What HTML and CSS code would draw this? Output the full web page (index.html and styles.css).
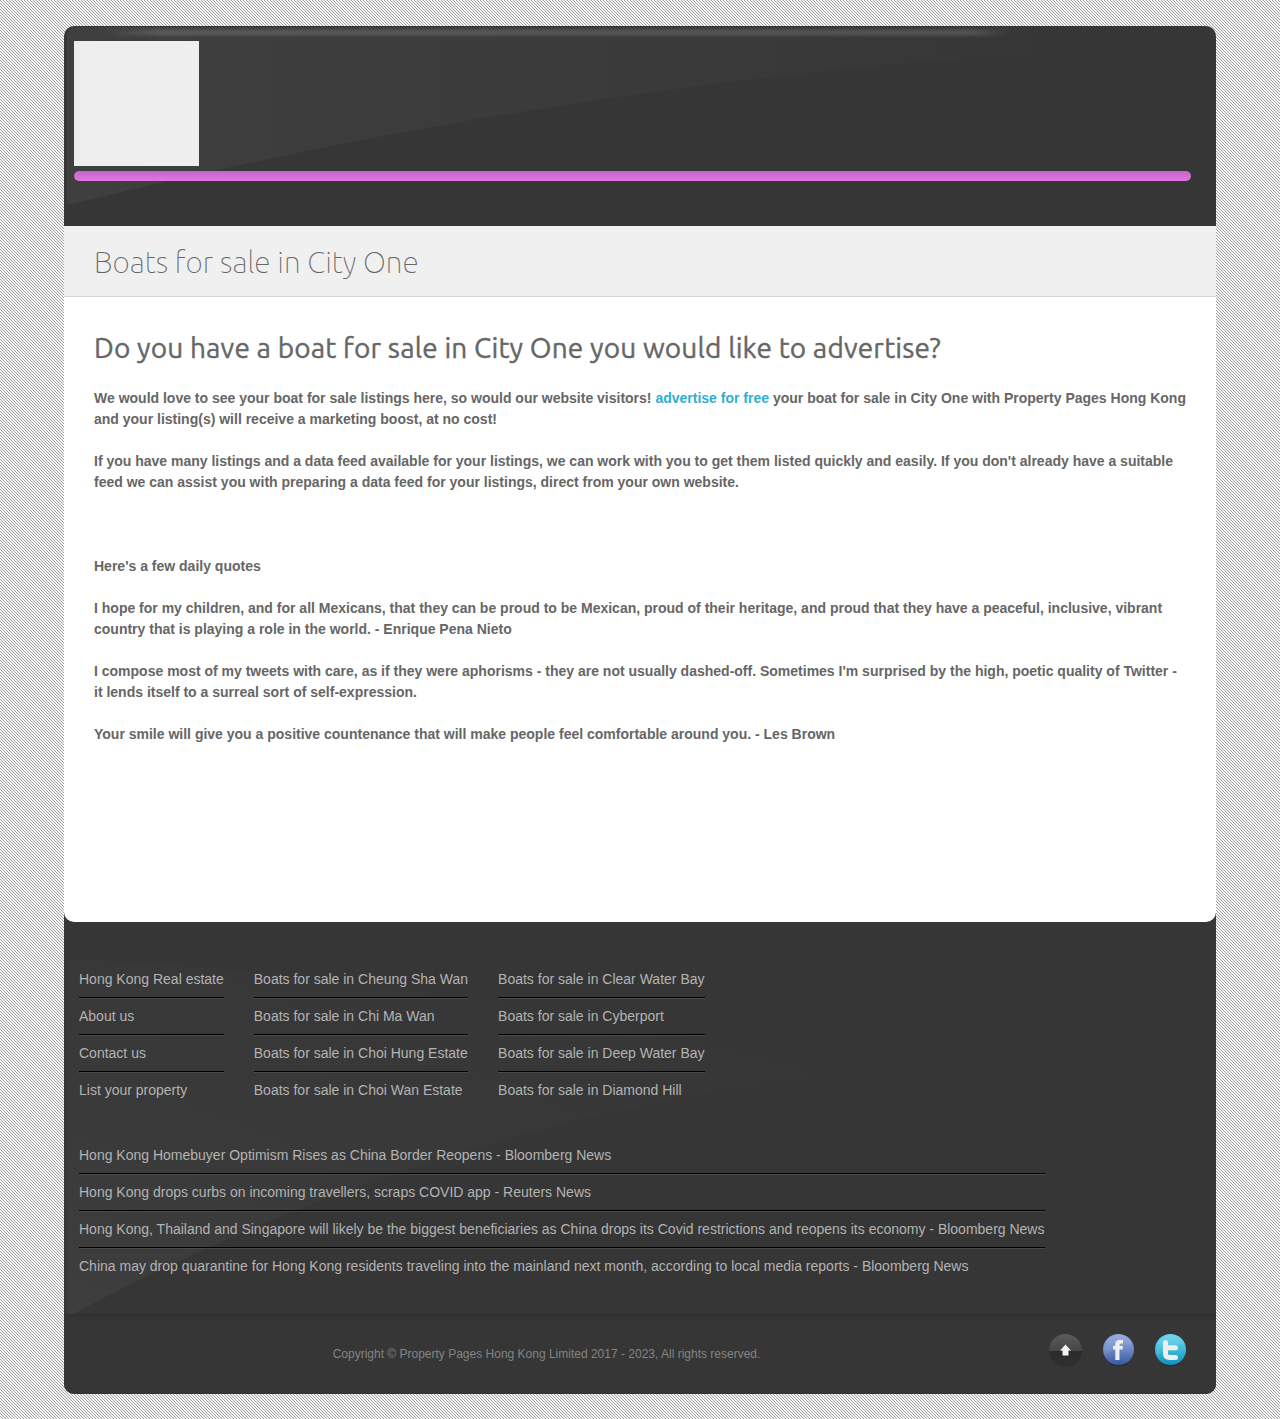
FILE: index.html
```html
<!DOCTYPE html>
<html lang="en">
<head>
<meta charset="utf-8">
<title>Boats for sale in City One</title>
<link rel="stylesheet" href="styles.css">
</head>
<body>
<div class="page">
  <header class="header">
    <svg class="header-shine" width="966" height="180" viewBox="0 0 966 180" aria-hidden="true">
      <defs>
        <linearGradient id="sweep" x1="0" x2="1"><stop offset="0" stop-color="#3f3f3f"/><stop offset=".5" stop-color="#3b3b3b"/><stop offset="1" stop-color="#373737"/></linearGradient>
        <linearGradient id="glow" x1="0" x2="1"><stop offset="0" stop-color="#595959" stop-opacity="0"/><stop offset=".06" stop-color="#595959"/><stop offset=".96" stop-color="#525252"/><stop offset="1" stop-color="#505050" stop-opacity="0"/></linearGradient>
        <filter id="soft" x="-5%" y="-200%" width="110%" height="500%"><feGaussianBlur stdDeviation="3 1.8"/></filter>
      </defs>
      <path d="M0 12Q0 1 10 1H962V27Q480 60 0 179Z" fill="url(#sweep)"/>
      <rect x="36" y="3.5" width="906" height="6" fill="url(#glow)" filter="url(#soft)"/>
    </svg>
    <div class="logo"></div>
    <div class="menu-bar"></div>
  </header>
  <div class="title-bar"><h1>Boats for sale in City One</h1></div>
  <main class="content">
    <h2>Do you have a boat for sale in City One you would like to advertise?</h2>
    <p>We would love to see your boat for sale listings here, so would our website visitors! <a href="#">advertise for free</a> your boat for sale in City One with Property Pages Hong Kong and your listing(s) will receive a marketing boost, at no cost!</p>
    <p class="feed">If you have many listings and a data feed available for your listings, we can work with you to get them listed quickly and easily. If you don't already have a suitable feed we can assist you with preparing a data feed for your listings, direct from your own website.</p>
    <p>Here's a few daily quotes</p>
    <p>I hope for my children, and for all Mexicans, that they can be proud to be Mexican, proud of their heritage, and proud that they have a peaceful, inclusive, vibrant country that is playing a role in the world. - Enrique Pena Nieto</p>
    <p>I compose most of my tweets with care, as if they were aphorisms - they are not usually dashed-off. Sometimes I'm surprised by the high, poetic quality of Twitter - it lends itself to a surreal sort of self-expression.</p>
    <p>Your smile will give you a positive countenance that will make people feel comfortable around you. - Les Brown</p>
  </main>
  <footer class="footer">
    <svg class="footer-shine" width="760" height="370" viewBox="0 0 760 370" aria-hidden="true">
      <defs>
        <linearGradient id="fan" x1="0" y1="1" x2=".8" y2="0"><stop offset="0" stop-color="#3e3e3e"/><stop offset=".45" stop-color="#393939"/><stop offset="1" stop-color="#363636"/></linearGradient>
      </defs>
      <path d="M0 10Q400 30 760 125Q360 175 0 368Z" fill="url(#fan)"/>
    </svg>
    <div class="link-columns">
      <ul class="links">
        <li>Hong Kong Real estate</li>
        <li>About us</li>
        <li>Contact us</li>
        <li>List your property</li>
      </ul>
      <ul class="links">
        <li>Boats for sale in Cheung Sha Wan</li>
        <li>Boats for sale in Chi Ma Wan</li>
        <li>Boats for sale in Choi Hung Estate</li>
        <li>Boats for sale in Choi Wan Estate</li>
      </ul>
      <ul class="links">
        <li>Boats for sale in Clear Water Bay</li>
        <li>Boats for sale in Cyberport</li>
        <li>Boats for sale in Deep Water Bay</li>
        <li>Boats for sale in Diamond Hill</li>
      </ul>
    </div>
    <ul class="links news">
      <li>Hong Kong Homebuyer Optimism Rises as China Border Reopens - Bloomberg News</li>
      <li>Hong Kong drops curbs on incoming travellers, scraps COVID app - Reuters News</li>
      <li>Hong Kong, Thailand and Singapore will likely be the biggest beneficiaries as China drops its Covid restrictions and reopens its economy - Bloomberg News</li>
      <li>China may drop quarantine for Hong Kong residents traveling into the mainland next month, according to local media reports - Bloomberg News</li>
    </ul>
    <div class="bottom">
      <p class="copyright">Copyright © Property Pages Hong Kong Limited 2017 - 2023, All rights reserved.</p>
      <div class="social">
        <svg width="33" height="33" viewBox="0 0 33 33" aria-label="Back to top">
          <defs><linearGradient id="up" x2="0" y2="1"><stop stop-color="#5b5b5b"/><stop offset=".5" stop-color="#464646"/><stop offset=".52" stop-color="#2b2b2b"/><stop offset="1" stop-color="#303030"/></linearGradient></defs>
          <circle cx="16.5" cy="16.5" r="16.5" fill="url(#up)"/>
          <path d="M16.5 10.5L22 16.5H19.5V21.5H13.5V16.5H11Z" fill="#f2f2f2"/>
        </svg>
        <svg width="32" height="33" viewBox="0 0 32 33" aria-label="Facebook">
          <defs><linearGradient id="fb" x2="0" y2="1"><stop stop-color="#91aadd"/><stop offset=".5" stop-color="#6d89c7"/><stop offset="1" stop-color="#3658a1"/></linearGradient></defs>
          <ellipse cx="15.7" cy="29.6" rx="9" ry="2.5" fill="#2a2a2a"/>
          <circle cx="15.5" cy="15.5" r="15.5" fill="url(#fb)"/>
          <path d="M2 22A14.5 14.5 0 0 1 29 10Q15 10 2 22Z" fill="#fff" opacity=".08"/>
          <path d="M12.3 26V15.5H10V12H12.3V10.5Q12.3 6 16.5 6H20V9.5H18Q16.5 9.5 16.5 11V12H20L19.5 15.5H16.5V26Z" fill="#eee"/>
        </svg>
        <svg width="32" height="33" viewBox="0 0 32 33" aria-label="Twitter">
          <defs><linearGradient id="tw" x2="0" y2="1"><stop stop-color="#67d3eb"/><stop offset=".5" stop-color="#3fbbdc"/><stop offset="1" stop-color="#148fbb"/></linearGradient></defs>
          <ellipse cx="15.7" cy="29.6" rx="9" ry="2.5" fill="#2a2a2a"/>
          <circle cx="15.5" cy="15.5" r="15.5" fill="url(#tw)"/>
          <path d="M2 22A14.5 14.5 0 0 1 29 10Q15 10 2 22Z" fill="#fff" opacity=".08"/>
          <path d="M10.5 8.5V19.5Q10.5 23.5 14.5 23.5H20.5M10.5 13.8H20.5" fill="none" stroke="#eee" stroke-width="5" stroke-linecap="round"/>
        </svg>
      </div>
    </div>
  </footer>
</div>
</body>
</html>
```

FILE: styles.css
```css
* { box-sizing: border-box; }
body {
  margin: 0;
  padding: 26px 64px 25px;
  font: 14px/21px "Liberation Sans", Arial, sans-serif;
  color: #666;
  background: #f2f2f2 url("data:image/svg+xml,%3Csvg xmlns='http://www.w3.org/2000/svg' width='3' height='3' shape-rendering='crispEdges'%3E%3Cpath fill='%23f5f5f5' d='M0 0h3v3H0z'/%3E%3Cpath fill='%23a3a3a3' d='M0 0h1v1H0zM1 1h1v1H1zM2 2h1v1H2z'/%3E%3C/svg%3E");
}
h1, h2, p, ul { margin: 0; padding: 0; }
.page {
  height: 1368px;
  display: flex;
  flex-direction: column;
  background: #363636;
  border-radius: 10px;
}
.header {
  position: relative;
  height: 200px;
  padding: 15px 25px 0 10px;
}
.header-shine { position: absolute; left: 3px; top: 0; }
.logo {
  position: relative;
  width: 125px;
  height: 125px;
  background: #eee;
}
.menu-bar {
  position: relative;
  height: 10px;
  margin-top: 5px;
  border-radius: 5px;
  background: linear-gradient(#c664c6, #e278e2);
}
.title-bar {
  height: 71px;
  padding: 16px 30px 0;
  background: #f0f0f0;
  border-bottom: 1px solid #d4d4d4;
}
h1, h2 { font-family: Ubuntu, "Open Sans", "Noto Sans", sans-serif; white-space: nowrap; }
h1 {
  font-size: 30px;
  line-height: 40px;
  font-weight: 100;
}
h2 {
  font-size: 28px;
  line-height: 36px;
  font-weight: 400;
  letter-spacing: 0.165px;
  -webkit-text-stroke: 0.4px #666;
  margin-bottom: 22px;
}
.content {
  height: 625px;
  padding: 33px 30px 0;
  background: #fff;
  border-radius: 0 0 10px 10px;
  font-weight: bold;
}
.content p { margin-bottom: 21px; }
.content .feed { margin-bottom: 63px; }
.content a { color: #2fafcf; text-decoration: none; }
.footer { position: relative; flex: 1; display: flex; flex-direction: column; }
.footer-shine { position: absolute; left: 3px; top: 27px; }
.link-columns { position: relative; display: flex; gap: 30px; padding: 39px 15px 0; }
.links { list-style: none; color: #b3b3b3; white-space: nowrap; }
.links li { height: 37px; padding-top: 8px; }
.links li:not(:last-child) { box-shadow: 0 1px #4a4a4a, inset 0 -1px #000; }
.news { position: relative; align-self: flex-start; min-width: 966px; margin: 28px 15px 0; }
.bottom {
  position: relative;
  margin-top: 29px;
  flex: 1;
  display: flex;
  padding: 20px 29px 0 0;
  background: linear-gradient(#303030, #363636 8px);
  border-radius: 0 0 10px 10px;
}
.copyright { flex: 1; padding-right: 20px; text-align: center; font-size: 12px; line-height: 40px; color: #848484; }
.social { display: flex; gap: 20px; }
.social svg:first-child { margin-right: 1px; }
```
